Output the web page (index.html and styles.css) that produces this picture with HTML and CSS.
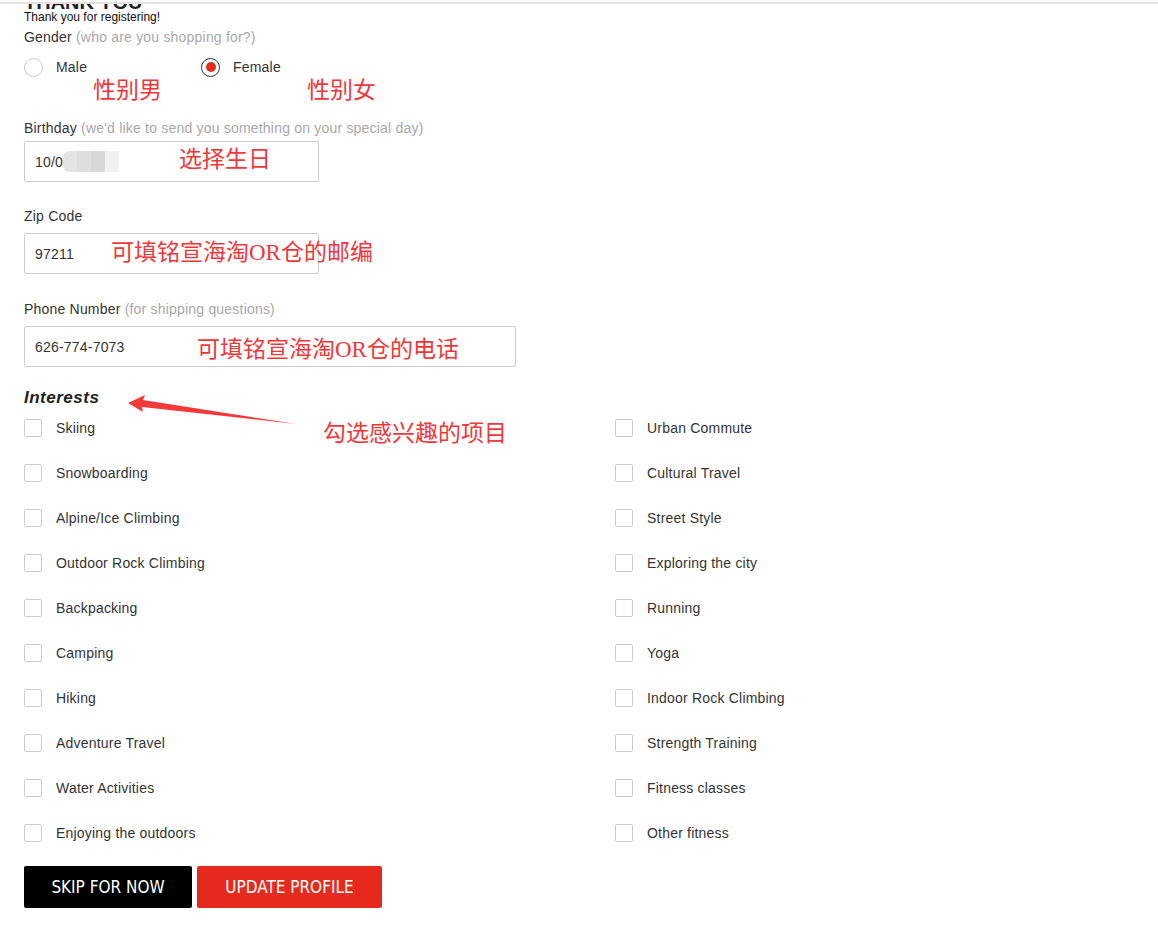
FILE: index.html
```html
<!DOCTYPE html>
<html>
<head>
    <title>Thank You</title>
    <link rel="stylesheet" href="styles.css">
</head>
<body>
    <div class="top-rule"></div>
    <div class="content">
        <h1 class="title">THANK YOU</h1>
        <div class="thanks">Thank you for registering!</div>

        <div class="label gender-label">Gender <span class="hint">(who are you shopping for?)</span></div>
        <div class="radios">
            <label class="radio-option">
                <span class="radio"></span>
                <span class="radio-text">Male</span>
                <span class="note note-male">性别男</span>
            </label>
            <label class="radio-option">
                <span class="radio checked"></span>
                <span class="radio-text">Female</span>
                <span class="note note-female">性别女</span>
            </label>
        </div>

        <div class="label birthday-label">Birthday <span class="hint">(we'd like to send you something on your special day)</span></div>
        <div class="field field-birthday">
            <div class="input short">10/0<span class="blur"></span></div>
            <span class="note note-birthday">选择生日</span>
        </div>

        <div class="label zip-label">Zip Code</div>
        <div class="field field-zip">
            <div class="input short">97211</div>
            <span class="note note-zip">可填铭宣海淘OR仓的邮编</span>
        </div>

        <div class="label phone-label">Phone Number <span class="hint">(for shipping questions)</span></div>
        <div class="field field-phone">
            <div class="input wide">626-774-7073</div>
            <span class="note note-phone">可填铭宣海淘OR仓的电话</span>
        </div>

        <div class="interests-head">
            <h2 class="interests-title">Interests</h2>
            <svg class="arrow" width="180" height="34" viewBox="0 0 180 34">
                <polygon points="0,9 17,1 15,6 168,30 14,13 15,18" fill="#f23a3a"/>
            </svg>
            <span class="note note-interests">勾选感兴趣的项目</span>
        </div>

        <div class="interests">
            <div class="check-row"><span class="box"></span>Skiing</div>
            <div class="check-row"><span class="box"></span>Urban Commute</div>
            <div class="check-row"><span class="box"></span>Snowboarding</div>
            <div class="check-row"><span class="box"></span>Cultural Travel</div>
            <div class="check-row"><span class="box"></span>Alpine/Ice Climbing</div>
            <div class="check-row"><span class="box"></span>Street Style</div>
            <div class="check-row"><span class="box"></span>Outdoor Rock Climbing</div>
            <div class="check-row"><span class="box"></span>Exploring the city</div>
            <div class="check-row"><span class="box"></span>Backpacking</div>
            <div class="check-row"><span class="box"></span>Running</div>
            <div class="check-row"><span class="box"></span>Camping</div>
            <div class="check-row"><span class="box"></span>Yoga</div>
            <div class="check-row"><span class="box"></span>Hiking</div>
            <div class="check-row"><span class="box"></span>Indoor Rock Climbing</div>
            <div class="check-row"><span class="box"></span>Adventure Travel</div>
            <div class="check-row"><span class="box"></span>Strength Training</div>
            <div class="check-row"><span class="box"></span>Water Activities</div>
            <div class="check-row"><span class="box"></span>Fitness classes</div>
            <div class="check-row"><span class="box"></span>Enjoying the outdoors</div>
            <div class="check-row"><span class="box"></span>Other fitness</div>
        </div>

        <div class="buttons">
            <button class="btn btn-skip">SKIP FOR NOW</button>
            <button class="btn btn-update">UPDATE PROFILE</button>
        </div>
    </div>
</body>
</html>
```

FILE: styles.css
```css
body {
    margin: 0;
    font-family: "Liberation Sans", Arial, sans-serif;
    font-size: 14px;
    letter-spacing: 0.2px;
    color: #333;
    background: #fff;
}

.top-rule {
    margin-top: 2px;
    height: 2px;
    background: #e2e2e2;
}

.content {
    overflow: hidden;
    padding: 0 24px 40px;
}

.title {
    margin: -12px 0 0;
    font-size: 20px;
    line-height: 20px;
    font-weight: bold;
    letter-spacing: 0;
    color: #222;
}

.thanks {
    margin-top: -2px;
    font-size: 12px;
    line-height: 14px;
    letter-spacing: 0;
    color: #111;
}

.label {
    line-height: 16px;
}

.hint {
    color: #a8a8a8;
}

.gender-label { margin-top: 5px; }

/* radios */
.radios {
    display: flex;
    margin-top: 12px;
    height: 20px;
}

.radio-option {
    position: relative;
    display: flex;
    align-items: center;
    width: 177px;
}

.radio {
    box-sizing: border-box;
    width: 19px;
    height: 19px;
    border: 1px solid #ccc;
    border-radius: 50%;
    margin-right: 13px;
    display: flex;
    align-items: center;
    justify-content: center;
}

.radio.checked {
    border-color: #333;
}

.radio.checked::after {
    content: "";
    width: 10px;
    height: 10px;
    border-radius: 50%;
    background: #e52b1f;
}

/* red notes drawn over the screenshot */
.note {
    position: absolute;
    font-family: "Liberation Serif", "Noto Sans CJK SC", serif;
    font-size: 23px;
    line-height: 26px;
    letter-spacing: 0;
    color: #f2373a;
    white-space: nowrap;
}

.note-male { left: 69px; top: 21px; }
.note-female { left: 106px; top: 21px; }

.birthday-label { margin-top: 43px; }
.zip-label { margin-top: 26px; }
.phone-label { margin-top: 27px; }

.field {
    position: relative;
    margin-top: 9px;
}

.field-birthday { margin-top: 5px; }

.input {
    box-sizing: border-box;
    height: 41px;
    border: 1px solid #ccc;
    border-radius: 2px;
    padding: 0 10px;
    display: flex;
    align-items: center;
    color: #333;
}

.short { width: 295px; }
.wide { width: 492px; }

.blur {
    display: inline-block;
    width: 56px;
    height: 21px;
    background: linear-gradient(90deg, #e4e4e4 0 14px, #dedede 14px 28px, #d8d8d8 28px 42px, #f1f1f1 42px 56px);
    border-radius: 6px 0 0 6px;
}

.note-birthday { left: 155px; top: 6px; }
.note-zip { left: 87px; top: 7px; }
.note-phone { left: 173px; top: 11px; }

/* interests */
.interests-head {
    position: relative;
    margin-top: 21px;
}

.interests-title {
    margin: 0;
    font-size: 17px;
    line-height: 20px;
    font-weight: bold;
    font-style: italic;
    letter-spacing: 0.5px;
    color: #222;
}

.arrow {
    position: absolute;
    left: 104px;
    top: 6px;
}

.note-interests { left: 299px; top: 33px; }

.interests {
    display: grid;
    grid-template-columns: 591px 591px;
    row-gap: 25px;
    margin-top: 10px;
}

.check-row {
    display: flex;
    align-items: center;
    height: 20px;
}

.box {
    box-sizing: border-box;
    width: 18px;
    height: 18px;
    border: 1px solid #ccc;
    border-radius: 2px;
    margin-right: 14px;
}

/* buttons */
.buttons {
    display: flex;
    gap: 5px;
    margin-top: 23px;
}

.btn {
    height: 42px;
    border: none;
    border-radius: 2px;
    color: #fff;
    font-family: "Liberation Sans Narrow", "DejaVu Sans Condensed", sans-serif;
    font-size: 17px;
    letter-spacing: 0;
    cursor: pointer;
}

.btn-skip {
    width: 168px;
    background: #000;
}

.btn-update {
    width: 185px;
    background: #e62a1e;
}
```
